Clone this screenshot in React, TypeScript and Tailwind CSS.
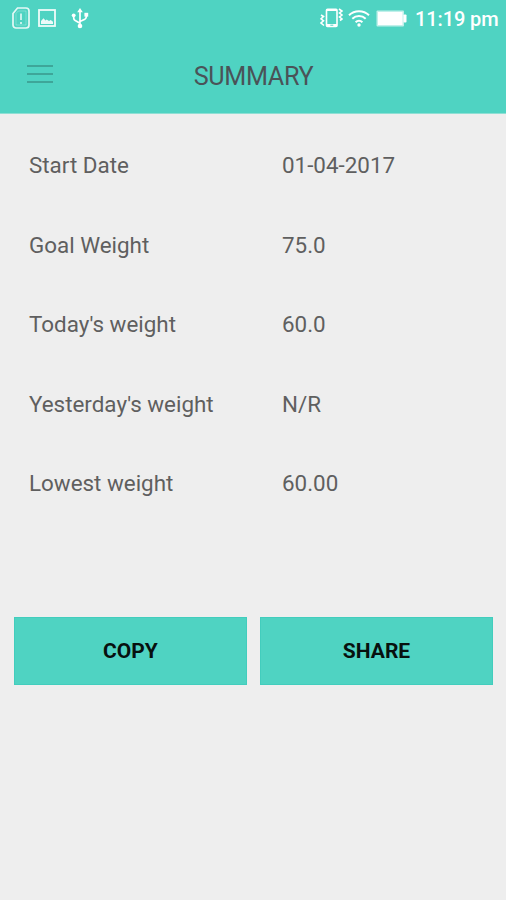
interface SummaryRow {
  label: string;
  value: string;
}

const rows: SummaryRow[] = [
  { label: "Start Date", value: "01-04-2017" },
  { label: "Goal Weight", value: "75.0" },
  { label: "Today's weight", value: "60.0" },
  { label: "Yesterday's weight", value: "N/R" },
  { label: "Lowest weight", value: "60.00" },
];

const SimAlertIcon = () => (
  <svg width="18" height="22" viewBox="0 0 18 22" fill="none" stroke="currentColor" className="opacity-85">
    <path d="M5.5 1H14a3 3 0 0 1 3 3v14a3 3 0 0 1-3 3H4a3 3 0 0 1-3-3V6.5z" strokeWidth="1.7" />
    <path d="M6.3 4H14v14H4V6.5z" strokeWidth=".8" opacity=".4" />
    <path d="M9 6.5v6.5M9 15v2" strokeWidth="1.6" />
  </svg>
);

const PictureIcon = () => (
  <svg width="18" height="18" viewBox="0 0 18 18" fill="none" stroke="currentColor" className="opacity-90">
    <rect x="1" y="1" width="16" height="16" strokeWidth="1.8" />
    <path d="M3 15v-3l2.500-2.800 2 2.300 1.200-1 2.300 1.600 1.700-1 2.300 1.600V15z" fill="currentColor" stroke="none" />
  </svg>
);

const UsbIcon = () => (
  <svg width="18" height="21" viewBox="0 0 18 21" fill="none" stroke="currentColor" strokeWidth="1.7">
    <path d="M9 3v14M9 15.200 4.200 12.600Q2.700 11.700 2.700 10V8M9 13.400l4.800-2.200q1.500-.8 1.500-2.400V6.500" />
    <path d="M9 0l2.800 4.200H6.200z" fill="currentColor" stroke="none" />
    <circle cx="2.700" cy="7.300" r="1.900" fill="currentColor" stroke="none" />
    <path d="M13.400 4.800h3.800v3.800h-3.800z" fill="currentColor" stroke="none" />
    <circle cx="9" cy="18" r="2.300" fill="currentColor" stroke="none" />
  </svg>
);

const VibrateIcon = () => (
  <svg width="23" height="20" viewBox="0 0 23 20" fill="none" stroke="currentColor">
    <rect x="6.500" y="1.200" width="10.500" height="17.300" rx="1" strokeWidth="1.600" />
    <path d="M6.500 2h10.500M6.500 17h10.500" strokeWidth="2.200" />
    <path d="M10.300 17.200h3" stroke="#4fd3c2" strokeWidth="1" />
    <path d="M1 7l2.500 1.500L1 10.800l2.500 2L1 15l3 2.500M19 1l3 2-2.500 2L22 7l-2.500 2 2.500 2-2 1.500" strokeWidth="1.600" />
  </svg>
);

const WifiIcon = () => (
  <svg width="22" height="18" viewBox="0 0 22 18" fill="none" stroke="currentColor" strokeWidth="2">
    <path d="M1 6.200a14.400 14.400 0 0 1 20 0M4.300 9.800a9.700 9.700 0 0 1 13.400 0M7.600 13.200a5 5 0 0 1 6.800 0" />
    <circle cx="11" cy="16" r="1.700" fill="currentColor" stroke="none" />
  </svg>
);

const BatteryIcon = () => (
  <svg width="31" height="17" viewBox="0 0 31 17">
    <rect x=".5" y=".5" width="27.500" height="16" rx="1" fill="currentColor" opacity=".65" />
    <rect x="2" y="2" width="24.500" height="13" fill="currentColor" />
    <rect x="27.500" y="4.500" width="3" height="8" rx=".8" fill="currentColor" />
  </svg>
);

const StatusBar = () => (
  <div className="flex h-9 items-center pl-3 pr-2 text-white">
    <SimAlertIcon />
    <div className="ml-2">
      <PictureIcon />
    </div>
    <div className="ml-[15px]">
      <UsbIcon />
    </div>
    <div className="ml-auto flex items-center">
      <VibrateIcon />
      <div className="ml-[5px] mr-[6px]">
        <WifiIcon />
      </div>
      <BatteryIcon />
      <span className="ml-2 w-[83px] whitespace-nowrap pt-[2px] text-[20px] font-medium leading-6 tracking-[-0.1px]">
        11:19 pm
      </span>
    </div>
  </div>
);

const Toolbar = () => (
  <div className="grid h-[77px] grid-cols-[1fr_auto_1fr] items-center pl-[27px] pr-[26px]">
    <button aria-label="Menu" className="-mt-[1px] flex w-[26px] flex-col gap-[6px]">
      <span className="h-[2px] bg-[#3ea699]" />
      <span className="h-[2px] bg-[#3ea699]" />
      <span className="h-[2px] bg-[#3ea699]" />
    </button>
    <h1 className="pt-[5px] text-[25.200px] leading-8 tracking-[-0.350px] text-[#4a5358]">SUMMARY</h1>
  </div>
);

export default function App() {
  return (
    <main className="h-[900px] w-[506px] overflow-hidden bg-[#eeeeee] font-['Roboto',sans-serif]">
      <header className="h-[114px] border-b border-[#8fdfd4] bg-[#4fd3c2]">
        <StatusBar />
        <Toolbar />
      </header>
      <dl className="pl-[29px] pt-[11.500px]">
        {rows.map((row) => (
          <div key={row.label} className="grid h-[79.500px] grid-cols-[253px_1fr] items-center text-[22.400px] leading-7 text-[#5f5f5f]">
            <dt>{row.label}</dt>
            <dd>{row.value}</dd>
          </div>
        ))}
      </dl>
      <div className="mt-[94px] grid grid-cols-2 gap-[13px] pl-[14px] pr-[13px] text-[21px] font-bold text-[#07110f]">
        <button className="h-[67.500px] border border-[#42cdbd] bg-[#4fd3c2] pt-[2px]">COPY</button>
        <button className="h-[67.500px] border border-[#42cdbd] bg-[#4fd3c2] pt-[2px]">SHARE</button>
      </div>
    </main>
  );
}
